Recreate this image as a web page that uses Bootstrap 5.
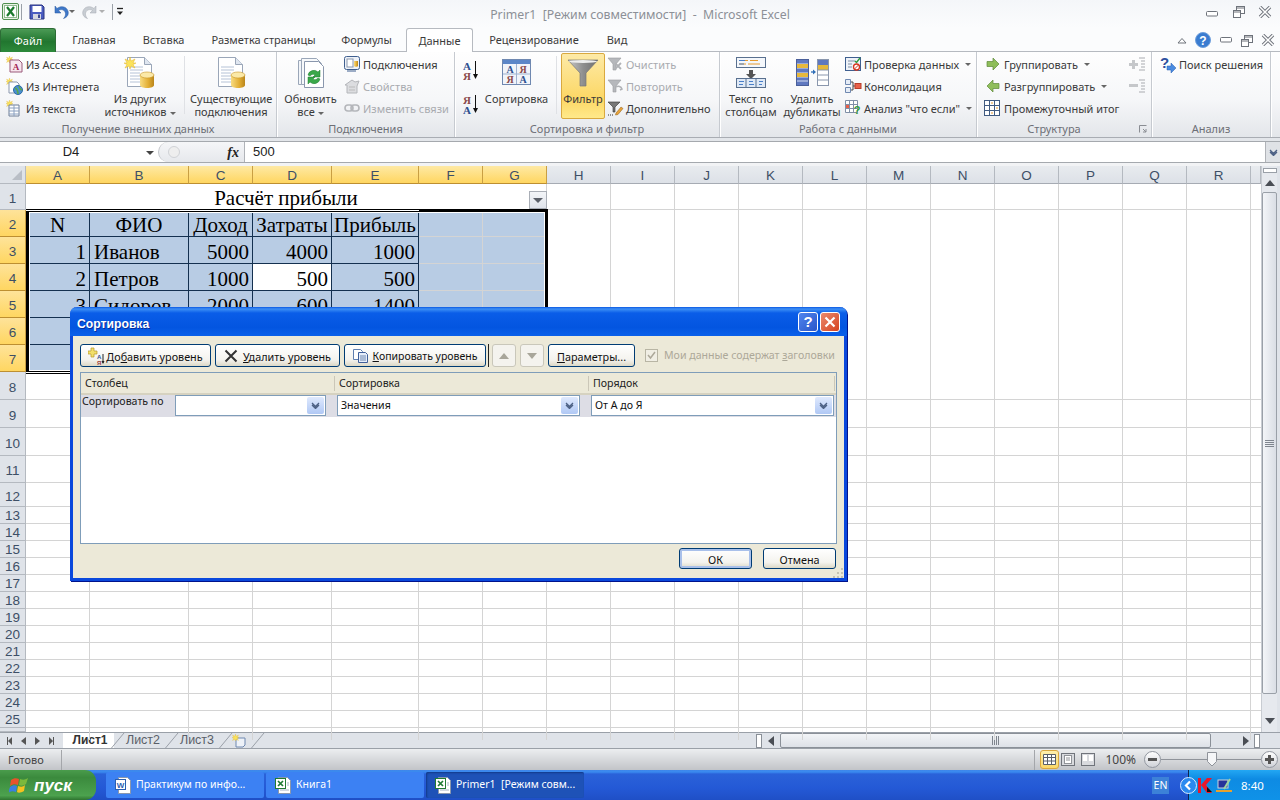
<!DOCTYPE html>
<html lang="ru">
<head>
<meta charset="utf-8">
<title>Primer1 - Microsoft Excel</title>
<link rel="stylesheet" href="https://cdn.jsdelivr.net/npm/bootstrap@5.3.0/dist/css/bootstrap.min.css">
<style>
html,body{margin:0;height:100%;overflow:hidden;background:#fff}
body,.xl-app{font-family:"Noto Sans","Liberation Sans",sans-serif;font-size:11px;line-height:13px;color:#333}
.xl-app{width:1280px;height:800px;position:relative;overflow:hidden}
/* title */
.ti-bar{height:28px;background:linear-gradient(#f4f6f9,#fbfcfd);position:relative}
.ti-qat{padding:1px 0 0 2px;height:22px}
.ti-sep{width:1px;height:16px;background:#9aa0a8;flex:none}
.ti-name{position:absolute;left:0;right:0;top:7px;text-align:center;color:#8c9097;font-size:12.3px;line-height:16px;white-space:pre}
.ti-win{position:absolute;right:0;top:5px;width:74px}
.ml1{margin-left:1px}.ml2{margin-left:2px}.ml3{margin-left:3px}.ml7{margin-left:7px}
/* tabs */
.rb-tabs{height:24px;background:#fbfcfd;border-bottom:1px solid #b6bac0;flex-wrap:nowrap}
.rb-tab{height:23px;line-height:24px;text-align:center;color:#3b3b3b}
.rb-file{width:56px;height:24px;background:linear-gradient(#4b9a55,#21762f 55%,#2d8a3b);color:#fff;border-radius:3px 3px 0 0;border:1px solid #2c6c35;border-bottom:0;margin-right:3px}
.rb-w70{width:70px}.rb-w69{width:69px}.rb-w131{width:131px}.rb-w75{width:75px}.rb-w122{width:122px}.rb-w44{width:44px}
.rb-act{width:67px;height:24px;margin-left:2px;background:#fff;border:1px solid #b6bac0;border-bottom:0;border-radius:3px 3px 0 0;position:relative;z-index:2}
.rb-right{position:absolute;right:5px;top:29px;height:22px;width:98px}
/* ribbon */
.rb-ribbon{height:86px;background:linear-gradient(#fefefe,#f6f7f9 55%,#e3e6ea);border-bottom:1px solid #a9adb3}
.rb-g{height:85px;border-right:1px solid #c6cad0;box-shadow:1px 0 0 #fff;flex:none}
.rb-g1{width:277px}.rb-g2{width:178px}.rb-g3{width:265px}.rb-g4{width:257px}.rb-g5{width:175px}.rb-g6{width:119px}
.rb-b{height:68px;padding-top:1px;flex:none}
.rb-lab{height:17px;line-height:17px;text-align:center;color:#6d6f76;position:relative}
.rb-s{height:22px;white-space:nowrap;gap:3px;color:#3a3a3a}
.rb-s svg{flex:none;overflow:visible}
.rb-dis{color:#a9abb0}
.rb-l{flex:none;text-align:center;color:#3a3a3a;white-space:nowrap}
.rb-li{height:39px;display:flex;align-items:center;justify-content:center}
.rb-vs{width:1px;height:58px;margin:3px 5px 0 6px;background:#dfe1e5;flex:none}
.rb-crt{display:inline-block;border-top:3px solid #666;border-left:3px solid transparent;border-right:3px solid transparent;vertical-align:middle;margin-left:3px}
.w102{width:102px}.w76{width:76px}.w82{width:82px}.w67{width:67px}.pl6{padding-left:6px}
.rb-filter{width:44px;height:66px;border:1px solid #d9a93f;border-radius:2px;background:linear-gradient(#fdeaa7,#fcd765 70%,#ffe98a)}
.rb-filter .rb-li{height:38px}
.rb-launch{position:absolute;right:4px;top:5px}
/* formula */
.fx-gap{height:4px;background:#e3e6ea;border-bottom:1px solid #a5a9ae}
.fx-bar{height:20px;background:#fff;border-bottom:1px solid #a5a9ae;box-sizing:content-box}
.fx-name{width:158px;position:relative;text-align:center;font-family:"Liberation Sans",sans-serif;font-size:13px;line-height:20px;padding-right:16px;color:#222}
.fx-mid{width:87px;height:20px;background:linear-gradient(#f5f6f8,#e6e8ec);border-radius:11px 0 0 11px;border:1px solid #c2c5ca;border-right:1px solid #b0b3b8;border-top:0;border-bottom:0;flex:none}
.fx-val{padding-left:8px;font-size:13px;line-height:20px;color:#222;font-family:"Liberation Sans",sans-serif}
.fx-fn{font-family:"Liberation Serif",serif;font-style:italic;font-weight:700;font-size:14px;color:#222;margin:0 5px 0 auto}
.fx-end{width:15px;height:20px;background:#dfe2e6;border-left:1px solid #b0b3b8}
.sh-band{height:3px;background:#f2f3f5}
/* sheet */
.sh-wrap{height:566px;position:relative}
.sh-main{width:1261px;flex:none}
.sh-heads{height:18px}
.sh-corner{width:26px;background:#dfe3e9;border-right:1px solid #b4b9c0;border-bottom:1px solid #b4b9c0;position:relative;flex:none}
.sh-ch{height:18px;text-align:center;font-family:"Liberation Sans",sans-serif;font-size:13.5px;line-height:19px;color:#3d4f66;background:linear-gradient(#e8ebef,#dde1e7);border-right:1px solid #b4b9c0;border-bottom:1px solid #a6abb3;flex:none}
.sh-ch.on{background:linear-gradient(#fee9a4,#ffd661);border-right-color:#c99f43;border-bottom-color:#bd8f31}
.c64{width:64px}.c99{width:99px}.c79{width:79px}.c87{width:87px}.c10{width:10px}
.sh-rh{width:26px;flex:none}
.sh-rn{text-align:center;font-family:"Liberation Sans",sans-serif;font-size:13.5px;color:#3d4f66;background:#dfe3e9;border-right:1px solid #b4b9c0;border-bottom:1px solid #b4b9c0;display:flex;align-items:center;justify-content:center;padding-top:3px}
.sh-rn.h17{padding-top:1px}.sh-rn.h4{padding-top:0}
.sh-rn.on{background:linear-gradient(#fee39a,#ffd661);border-right-color:#c99f43;border-bottom-color:#bd8f31}
.h26{height:26px}.h27{height:27px}.h28{height:28px}.h24{height:24px}.h17{height:17px}.h4{height:4px}
.sh-body{width:1235px;position:relative;flex:none;
background-image:linear-gradient(#d4d4d4,#d4d4d4),linear-gradient(#d4d4d4,#d4d4d4),linear-gradient(#d4d4d4,#d4d4d4),linear-gradient(#d4d4d4,#d4d4d4),linear-gradient(#d4d4d4,#d4d4d4),linear-gradient(#d4d4d4,#d4d4d4),linear-gradient(#d4d4d4,#d4d4d4),linear-gradient(#d4d4d4,#d4d4d4),linear-gradient(#d4d4d4,#d4d4d4),linear-gradient(#d4d4d4,#d4d4d4),linear-gradient(#d4d4d4,#d4d4d4),linear-gradient(#d4d4d4,#d4d4d4),linear-gradient(#d4d4d4,#d4d4d4),linear-gradient(#d4d4d4,#d4d4d4),linear-gradient(#d4d4d4,#d4d4d4),linear-gradient(#d4d4d4,#d4d4d4),linear-gradient(#d4d4d4,#d4d4d4),linear-gradient(#d4d4d4,#d4d4d4);
background-size:1px 100%;background-repeat:no-repeat;
background-position:63px 0,162px 0,226px 0,305px 0,392px 0,456px 0,520px 0,584px 0,648px 0,712px 0,776px 0,840px 0,904px 0,968px 0,1032px 0,1096px 0,1160px 0,1224px 0}
.sh-row{border-bottom:1px solid #d4d4d4}
.sh-title{height:25px;width:520px;background:#fff;text-align:center;font-family:"Liberation Serif",serif;font-size:21px;line-height:28px;color:#000;overflow:hidden}
.sh-cell{font-family:"Liberation Serif",serif;font-size:21px;line-height:26px;color:#000;background:#b8cce4;border-right:1px solid #14304f;border-bottom:1px solid #14304f;padding:2px 3px 0 4px;white-space:nowrap;flex:none;overflow:hidden}
.sh-cell.text-center{padding-left:0;padding-right:0}
.sh-cell.pale{border-right-color:#d4d4d4;border-bottom-color:#d4d4d4}
.sh-cell.cur{background:#fff}
.sh-sel{position:absolute;left:0;top:25px;width:522px;height:165px;border:3px solid #000;box-shadow:inset 0 0 0 1px #fff;pointer-events:none}
.sh-sel:before,.sh-sel:after{content:"";position:absolute;left:-3px;width:393px;height:1px;background:#fff}
.sh-sel:before{top:-2px}.sh-sel:after{bottom:-2px}
.sh-dd{position:absolute;left:503px;top:7px;width:18px;height:18px;background:linear-gradient(#f3f5f8,#dfe3ea);border:1px solid #a9aeb6}
.sh-vs{width:16px;flex:none;background:#e6e9ee;border-left:1px solid #c8ccd2;padding-top:2px}
.sh-vs-split{width:14px;height:5px;margin:0 auto 7px;border:1px solid #9aa0a8;background:#fff}
.sh-vs-th{width:15px;height:502px;margin-top:6px;border:1px solid #9aa0a8;border-radius:2px;background:linear-gradient(90deg,#f3f5f8,#dadee5)}
.sh-edge{width:3px;background:#dfe3e9;flex:none}
/* tabs strip */
.ts-bar{height:17px;background:#dfe3e9;border-top:1px solid #9aa0a8;border-bottom:1px solid #9aa0a8}
.ts-nav{width:63px;padding-left:7px;gap:9px;flex:none}
.ts-tab{height:15px;line-height:15px;color:#5a5f68;text-align:center;font-size:12.5px;font-family:"Liberation Sans",sans-serif;flex:none}
.ts-on{width:51px;background:#fff;font-weight:700;color:#333;padding-left:3px;font-size:12px}
.ts-t{width:53px;padding-left:3px}
.ts-s1{margin:0 -10px 0 -3px}
.ts-h{width:6px;height:14px;border:1px solid #8a9098;background:#fff;flex:none}
.ts-th{width:431px;height:15px;border:1px solid #8a9098;border-radius:2px;background:linear-gradient(#f2f4f7,#dde1e7);flex:none}
/* status */
.st-bar{height:21px;background:linear-gradient(#eceef0,#c2c4c8);color:#444}
.st-ready{width:62px;padding-left:8px;line-height:20px;border-right:1px solid #a4a6aa;height:20px;flex:none}
.st-sep{width:1px;height:20px;background:#a4a6aa;flex:none;margin-right:5px}
.st-cur{width:19px;height:19px;background:linear-gradient(#fff0ad,#fbd868);border:1px solid #dba83f;border-radius:3px;flex:none}
.st-pct{font-size:12px;color:#444;margin:0 8px 0 10px}
.st-rd{width:17px;height:17px;border-radius:50%;border:1px solid #9297a0;background:linear-gradient(#fff,#cfd2d8);flex:none}
.st-line{height:1px;background:#8f939a;width:100px;position:relative;flex:none}
.st-thumb{position:absolute;left:46px;top:-7px}
/* taskbar */
.tb-bar{height:30px;background:linear-gradient(#3f86ea 0,#3a8bf0 2px,#2a62d9 4px,#2459d6 60%,#1f4fc6 100%);color:#fff}
.tb-start{width:96px;height:30px;background:linear-gradient(#4a9c4c,#3b8a3d 25%,#4ca24e 85%,#2f7430);border-radius:0 11px 11px 0;font-style:italic;font-weight:700;font-size:17px;font-family:"Liberation Sans",sans-serif;gap:5px;padding-left:9px;color:#fff;flex:none}
.tb-btn{width:158px;height:26px;margin-right:2px;background:#3c81f3;border-radius:2px;padding:0 0 0 9px;gap:5px;color:#fff;font-size:10.5px;white-space:pre;flex:none;border:0}
.tb-btn:hover{background:#3c81f3;color:#fff}
.tb-act,.tb-act:hover{background:#1e52b7;box-shadow:inset 1px 1px 2px #123a88}
.tb-tray{width:92px;height:30px;background:linear-gradient(#23a7f3,#0e8be3 30%,#0f92e8);border-left:1px solid #10264f;gap:1px;flex:none}
.tb-en{width:17px;height:17px;background:#3c81d8;font-size:10.5px;line-height:17px;text-align:center;margin-right:19px;flex:none}
.tb-arrow{margin-left:-9px}
/* dialog */
.xd-win{position:absolute;left:70px;top:307px;width:777px;height:274px;border:3px solid #0a48dc;border-top:0;border-radius:7px 7px 0 0;background:#ece9d8;z-index:5;box-shadow:1px 1px 0 #00138c;font-size:10.6px}
.xd-title{height:29px;margin:0 -3px;padding:0 7px 0 7px;border-radius:7px 7px 0 0;background:linear-gradient(#0a58e2 0,#3d8ff5 2px,#0a5de8 6px,#0355e0 70%,#0a60ea 100%);color:#fff;font-family:"Liberation Sans",sans-serif;font-weight:700;font-size:12.2px;text-shadow:1px 1px 0 #0a2f9c}
.xd-tname{margin-top:5px}
.xd-hb{width:20px;height:20px;border:1px solid #fff;border-radius:3px;flex:none;font-size:15px;line-height:18px;text-align:center;font-weight:700;font-family:"Liberation Sans",sans-serif;text-shadow:none;color:#fff}
.xd-q{background:linear-gradient(135deg,#4f85ee,#2a56c9);margin-right:2px}
.xd-x{background:linear-gradient(135deg,#ea8a6e,#d6431f)}
.xd-tools{padding:8px 0 0 7px;height:31px}
.xd-btn{height:23px;padding:1px 0 0 0;border:1px solid #003c74;border-radius:3px;background:linear-gradient(#fff,#f4f3ee 70%,#dcd8c6);color:#111;font-size:10.8px;line-height:13px;white-space:nowrap;flex:none;box-shadow:none;gap:1px}
.xd-btn:hover{background:linear-gradient(#fff,#f4f3ee 70%,#dcd8c6);color:#111;border-color:#003c74}
.w131{width:131px}.w125{width:125px}.w142{width:142px;font-size:10.5px}.w24{width:24px}.w88{width:87px}.w73{width:73px}
.xd-dis{border-color:#c9c7ba;background:#f4f3ee}
.xd-bar{width:1px;height:23px;background:#222;margin:0 3px 0 2px;flex:none}
.xd-chk{width:13px;height:13px;border:1px solid #b8b5a4;background:#f0eee4;flex:none}
.xd-chkw{margin-left:10px;gap:6px}
.xd-gray{color:#aca899;white-space:nowrap}
.xd-tbl{height:172px;margin:5px 7px 0 7px;border:1px solid #7f9db9;background:#fff}
.xd-th{height:20px;background:#ece9d8;line-height:20px;color:#222}
.xd-thc{padding-left:4px;border-right:1px solid #cbc7b8;height:15px;line-height:15px;flex:none}
.xd-w254{width:254px}.xd-w246{width:246px}
.xd-lin{height:2px;background:#d6d2c0}
.xd-tr{height:22px;background:#dddde5}
.xd-lb{width:94px;padding:0 0 0 1px;flex:none;color:#222;white-space:nowrap}
.xd-cb{height:21px;background:#fff;border:1px solid #7f9db9;padding:1px 1px 1px 3px;flex:none;color:#111;line-height:16px}
.xd-w151{width:151px}.xd-w243{width:243px;margin-left:11px}
.xd-ar{width:17px;height:17px;margin-left:auto;background:linear-gradient(#dfe9fd,#b0c8f5);border-radius:2px;flex:none}
.xd-foot{padding:4px 8px 0 0;gap:11px}
.xd-btn.xd-f{height:21px}
.xd-ok{box-shadow:inset 0 0 0 2px #a9c0ea}
.xd-grip{position:absolute;right:0;bottom:0}
.xl-defs{position:absolute;width:0;height:0;overflow:hidden}
</style>
</head>
<body>
<svg class="xl-defs" aria-hidden="true"><defs>
<linearGradient id="gold" x1="0" x2="1"><stop offset="0" stop-color="#f8dc82"/><stop offset=".6" stop-color="#e2ad33"/><stop offset="1" stop-color="#b9851c"/></linearGradient>
<linearGradient id="fun" x1="0" x2="1"><stop offset="0" stop-color="#c9c9c9"/><stop offset=".5" stop-color="#8f8f8f"/><stop offset="1" stop-color="#6e6e6e"/></linearGradient>
<symbol id="s-star" viewBox="0 0 12 12"><path d="M6 0l1 4 4-2-2 4 3 0-3 1.500 2 3.500-4-2-1 3-1-3-4 2 2-3.500L0 6l3 0-2-4 4 2z" fill="#fbe35c" stroke="#e2b52a" stroke-width=".5"/></symbol>
<symbol id="s-dbdoc" viewBox="0 0 32 32"><path d="M3.500.5h17l7 7v22h-24z" fill="#fff" stroke="#9aa6b8"/><path d="M20.500.5v7h7" fill="#dfe6f0" stroke="#9aa6b8"/><path d="M6 10h13M6 13h13M6 16h10M6 19h10M6 22h10M6 25h10" stroke="#b5c2d6"/><path d="M16 18v10c0 1.800 3 3 7 3s7-1.200 7-3V18z" fill="url(#gold)"/><ellipse cx="23" cy="18" rx="7" ry="3" fill="#fbe9a8" stroke="#c8962a" stroke-width=".6"/></symbol>
<symbol id="s-chev" viewBox="0 0 9 7"><path d="M1 1l3.500 3.500L8 1M1 3l3.500 3.500L8 3" fill="none" stroke="#4d6185" stroke-width="1.300"/></symbol>
<symbol id="s-xdoc" viewBox="0 0 16 18"><path d="M3.500 1.500h9l3 3v13h-12z" fill="#fff" stroke="#8a97ad"/><rect x=".5" y="2.500" width="10" height="10" fill="#fff" stroke="#217a34"/><path d="M3 5l5 5M8 5l-5 5" stroke="#1f7a33" stroke-width="1.700"/><path d="M12 7h2M12 9h2M5 14h9" stroke="#a6b2c4"/></symbol>
<symbol id="s-rest" viewBox="0 0 13 13"><rect x="4.500" y="1.500" width="8" height="7" fill="#fff" stroke="#6e737b"/><path d="M5 3h7" stroke="#6e737b"/><rect x="1.500" y="5.500" width="7" height="7" fill="#fff" stroke="#6e737b"/><path d="M2 7h6" stroke="#6e737b"/></symbol>
<symbol id="s-x" viewBox="0 0 14 12"><path d="M2 1l10 10M12 1L2 11" stroke="#6e737b" stroke-width="3.400"/><path d="M2 1l10 10M12 1L2 11" stroke="#fff" stroke-width="1.500"/></symbol>
<symbol id="s-minw" viewBox="0 0 12 6"><rect x=".5" y=".5" width="11" height="4.500" rx="1" fill="#fff" stroke="#6e737b"/></symbol>
<symbol id="s-sma" viewBox="0 0 16 24"><text x="0" y="10" font-family="Liberation Serif" font-weight="700" font-size="11" fill="#2d4f8f">A</text><text x="0" y="20" font-family="Liberation Serif" font-weight="700" font-size="11" fill="#8a4a4a">Я</text><path d="M12.500 1v16" stroke="#111"/><path d="M10 14l2.500 5 2.500-5z" fill="#111"/></symbol>
<symbol id="s-smz" viewBox="0 0 16 24"><text x="0" y="10" font-family="Liberation Serif" font-weight="700" font-size="11" fill="#8a4a4a">Я</text><text x="0" y="20" font-family="Liberation Serif" font-weight="700" font-size="11" fill="#2d4f8f">A</text><path d="M12.500 1v16" stroke="#111"/><path d="M10 14l2.500 5 2.500-5z" fill="#111"/></symbol>
<symbol id="s-fil" viewBox="0 0 16 16"><path d="M1 2h13L9 8v6H6V8z" fill="#b6b8bc" stroke="#9a9ca0" stroke-width=".6"/></symbol>
</defs></svg>

<div class="xl-app d-flex flex-column">

<div class="ti-bar flex-none">
  <div class="ti-qat d-flex align-items-center">
    <svg width="17" height="17" viewBox="0 0 17 17" class="flex-none"><rect x=".5" y=".5" width="16" height="16" rx="1.500" fill="#e9f3e6" stroke="#4f8f4f"/><rect x="2.500" y="2.500" width="12" height="12" fill="#fff" stroke="#8fb98f"/><path d="M5 4l7 9M12 4l-7 9" stroke="#1c7a2d" stroke-width="2.200"/></svg>
    <span class="ti-sep ml2"></span>
    <svg width="16" height="16" viewBox="0 0 16 16" class="ml7 flex-none"><path d="M1 1h12l2 2v12H1z" fill="#4a5cc0" stroke="#2b3480"/><rect x="3.500" y="2" width="9" height="6" fill="#fff"/><rect x="4" y="10" width="8" height="5" fill="#d4d6e0"/><rect x="9" y="10.500" width="2" height="3.500" fill="#3a4790"/></svg>
    <svg width="17" height="14" viewBox="0 0 17 14" class="ml7 flex-none"><path d="M3 1v7h6L6.500 5.500C9.500 3.500 13 5 13.500 8.500c.2 2-.5 3.500-2 5 4-1 5.500-4.500 4.500-7.500C14.500 1.500 9 .3 5 3.500z" fill="#3e78c9" stroke="#27569c" stroke-width=".5"/></svg>
    <span class="rb-crt m-0 ml1"></span>
    <svg width="17" height="14" viewBox="0 0 17 14" class="ml7 flex-none"><path d="M14 1v7H8l2.500-2.500C7.500 3.500 4 5 3.500 8.500c-.2 2 .5 3.500 2 5-4-1-5.500-4.500-4.500-7.500C2.500 1.500 8 .3 12 3.500z" fill="#c8cdd3" stroke="#a5a9b0" stroke-width=".5"/></svg>
    <span class="rb-crt m-0 ml1 opacity-50"></span>
    <span class="ti-sep ml7"></span>
    <svg width="8" height="10" viewBox="0 0 8 10" class="ml3 flex-none"><path d="M1 1.500h6" stroke="#222" stroke-width="1.300"/><path d="M1 4.500h6L4 8z" fill="#222"/></svg>
  </div>
  <div class="ti-name">Primer1  [Режим совместимости]  -  Microsoft Excel</div>
  <div class="ti-win d-flex align-items-center justify-content-between">
    <svg width="12" height="6" class="mt-1"><use href="#s-minw"/></svg>
    <svg width="13" height="13"><use href="#s-rest"/></svg>
    <svg width="14" height="12" class="me-2"><use href="#s-x"/></svg>
  </div>
</div>

<div class="nav rb-tabs position-relative">
  <div class="rb-tab rb-file">Файл</div>
  <div class="rb-tab rb-w70">Главная</div>
  <div class="rb-tab rb-w69">Вставка</div>
  <div class="rb-tab rb-w131">Разметка страницы</div>
  <div class="rb-tab rb-w75">Формулы</div>
  <div class="rb-tab rb-act">Данные</div>
  <div class="rb-tab rb-w122">Рецензирование</div>
  <div class="rb-tab rb-w44">Вид</div>
</div>
<div class="rb-right d-flex align-items-center justify-content-between">
  <svg width="10" height="7" viewBox="0 0 10 7"><path d="M1 6l4-4.500L9 6z" fill="#fff" stroke="#6e737b"/></svg>
  <svg width="16" height="16" viewBox="0 0 16 16"><circle cx="8" cy="8" r="7.500" fill="#3a7cd0" stroke="#6e9fdc"/><text x="8" y="12.500" text-anchor="middle" font-family="Liberation Sans" font-weight="700" font-size="12" fill="#fff">?</text></svg>
  <svg width="12" height="6"><use href="#s-minw"/></svg>
  <svg width="13" height="13"><use href="#s-rest"/></svg>
  <svg width="14" height="12"><use href="#s-x"/></svg>
</div>

<div class="rb-ribbon d-flex flex-none">
  <!-- group 1 -->
  <div class="rb-g rb-g1">
    <div class="rb-b d-flex">
      <div class="w102 pl6">
        <div class="rb-s d-flex align-items-center"><svg width="17" height="17" viewBox="0 0 17 17"><use href="#s-star" width="7" height="7"/><path d="M4 4h9l3 3v9H4z" fill="#f7e6ee" stroke="#9a5a7a"/><text x="10" y="14" text-anchor="middle" font-family="Liberation Serif" font-weight="700" font-size="9" fill="#a3224f">A</text></svg>Из Access</div>
        <div class="rb-s d-flex align-items-center"><svg width="17" height="17" viewBox="0 0 17 17"><use href="#s-star" width="7" height="7"/><path d="M3 4h8l2 2v9H3z" fill="#fff" stroke="#8a97ad"/><circle cx="12" cy="12" r="4.500" fill="#4b8fd0" stroke="#2c6aa8"/><path d="M9 10c2 1 3 3 3 6M13 8c1 2 0 3 3 4" stroke="#5da84a" stroke-width="1.500" fill="none"/></svg>Из Интернета</div>
        <div class="rb-s d-flex align-items-center"><svg width="17" height="17" viewBox="0 0 17 17"><use href="#s-star" width="7" height="7"/><path d="M3 5h10v11H3z" fill="#fff" stroke="#6f7f97"/><path d="M3 8h10M3 11h10M3 14h10M8 5v11" stroke="#8aa0c0"/></svg>Из текста</div>
      </div>
      <div class="rb-l w76">
        <div class="rb-li"><svg width="32" height="32" style="overflow:visible"><use href="#s-dbdoc" width="32" height="32"/><use href="#s-star" width="12" height="12"/></svg></div>
        Из других<br>источников<span class="rb-crt"></span>
      </div>
      <div class="rb-vs"></div>
      <div class="rb-l w82">
        <div class="rb-li"><svg width="32" height="32"><use href="#s-dbdoc" width="32" height="32"/></svg></div>
        Существующие<br>подключения
      </div>
    </div>
    <div class="rb-lab">Получение внешних данных</div>
  </div>
  <!-- group 2 -->
  <div class="rb-g rb-g2">
    <div class="rb-b d-flex">
      <div class="rb-l w67">
        <div class="rb-li"><svg width="28" height="32" viewBox="0 0 28 32"><path d="M1.500 3.500h15l5 5v19h-20z" fill="#f2f5f9" stroke="#9aa6b8"/><path d="M4.500 1.500h15l5 5v21h-20z" fill="#f7f9fb" stroke="#9aa6b8"/><path d="M7.500 4.500h14l5 5v21h-19z" fill="#fff" stroke="#8a97ad"/><path d="M11 18a6 6 0 0 1 10-3l2-2v7h-7l2-2a3.500 3.500 0 0 0-5 1zM23 22a6 6 0 0 1-10 3l-2 2v-7h7l-2 2a3.500 3.500 0 0 0 5-1z" fill="#3aa84a" stroke="#1e7f30" stroke-width=".5"/></svg></div>
        Обновить<br>все<span class="rb-crt"></span>
      </div>
      <div>
        <div class="rb-s d-flex align-items-center"><svg width="16" height="16" viewBox="0 0 16 16"><rect x=".5" y=".5" width="15" height="13" rx="2" fill="#eef2f8" stroke="#3f5f8f"/><rect x="3" y="3" width="6" height="8" fill="#fff" stroke="#8a97ad"/><path d="M10 5v5c0 1 4 1 4 0V5z" fill="url(#gold)"/><path d="M3 15h9" stroke="#3f5f8f"/></svg>Подключения</div>
        <div class="rb-s d-flex align-items-center rb-dis"><svg width="16" height="16" viewBox="0 0 16 16"><path d="M1 7l7-5 3 2 4-1-2 5v7H3V7z" fill="#dcdde0" stroke="#b4b6ba"/><path d="M5 9h6M5 12h6" stroke="#bbb"/></svg>Свойства</div>
        <div class="rb-s d-flex align-items-center rb-dis"><svg width="16" height="16" viewBox="0 0 16 16"><rect x="1" y="5" width="8" height="6" rx="3" fill="none" stroke="#b4b6ba" stroke-width="1.600"/><rect x="7" y="5" width="8" height="6" rx="3" fill="none" stroke="#b4b6ba" stroke-width="1.600"/></svg>Изменить связи</div>
      </div>
    </div>
    <div class="rb-lab">Подключения</div>
  </div>
  <!-- group 3 -->
  <div class="rb-g rb-g3">
    <div class="rb-b d-flex">
      <div class="d-flex flex-column" style="padding:7px 0 0 8px;gap:10px;width:29px">
        <svg width="16" height="24"><use href="#s-sma"/></svg>
        <svg width="16" height="24"><use href="#s-smz"/></svg>
      </div>
      <div class="rb-l" style="width:65px">
        <div class="rb-li"><svg width="30" height="27" viewBox="0 0 30 27"><rect x=".5" y=".5" width="28" height="25" fill="#f1f4fa" stroke="#6f88b0"/><rect x="1" y="1" width="27" height="4" fill="#5b86c8"/><path d="M14.500 5v20M1 15h27" stroke="#9fb3d0"/><g font-family="Liberation Serif" font-weight="700" font-size="10" text-anchor="middle"><text x="8" y="14" fill="#2d4f8f">A</text><text x="21" y="14" fill="#8a4a4a">Я</text><text x="8" y="24" fill="#8a4a4a">Я</text><text x="21" y="24" fill="#2d4f8f">A</text></g></svg></div>
        Сортировка
      </div>
      <div class="rb-vs" style="margin:3px 4px 0 7px"></div>
      <div class="rb-l rb-filter">
        <div class="rb-li"><svg width="32" height="28" viewBox="0 0 32 28"><path d="M1 1h30L19 14v13h-6V14z" fill="url(#fun)" stroke="#777" stroke-width=".7"/><ellipse cx="16" cy="2.500" rx="14" ry="1.500" fill="#eee"/></svg></div>
        Фильтр
      </div>
      <div style="padding-left:2px">
        <div class="rb-s d-flex align-items-center rb-dis"><svg width="16" height="16"><use href="#s-fil"/><path d="M8 7l6 6M14 7l-6 6" stroke="#b0b2b6" stroke-width="1.800"/></svg>Очистить</div>
        <div class="rb-s d-flex align-items-center rb-dis"><svg width="16" height="16"><use href="#s-fil"/><path d="M9 9a4 4 0 0 1 6 2l-2 1M14 14" stroke="#b0b2b6" stroke-width="1.500" fill="none"/></svg>Повторить</div>
        <div class="rb-s d-flex align-items-center"><svg width="16" height="16" viewBox="0 0 16 16"><path d="M1 2h12L8 7v5H6V7z" fill="#777" stroke="#333" stroke-width=".6"/><path d="M9 13l5-6 2 1.500-5 6-2.500 .5z" fill="#e8a33a" stroke="#8a5a10" stroke-width=".5"/><path d="M1 15h1M3 15h1M5 15h1" stroke="#333"/></svg>Дополнительно</div>
      </div>
    </div>
    <div class="rb-lab">Сортировка и фильтр</div>
  </div>
  <!-- group 4 -->
  <div class="rb-g rb-g4">
    <div class="rb-b d-flex">
      <div class="rb-l" style="width:62px">
        <div class="rb-li"><svg width="30" height="31" viewBox="0 0 30 31"><rect x=".5" y=".5" width="29" height="10" fill="#f4f7fb" stroke="#59708f"/><path d="M3 3.500h9M14 3.500h8M3 7h7M12 7h12" stroke="#e69a2e"/><path d="M3 3.500h6M3 7h5" stroke="#4a7fc8"/><path d="M13 13h4v4h3l-5 5-5-5h3z" fill="#555"/><rect x=".5" y="21.500" width="29" height="9" fill="#dfe9f6" stroke="#59708f"/><path d="M10 22v8M20 22v8" stroke="#59708f"/><path d="M3 24.500h5M13 24.500h4M23 24.500h4M3 27.500h4M13 27.500h5M23 27.500h3" stroke="#4a7fc8"/></svg></div>
        Текст по<br>столбцам
      </div>
      <div class="rb-l" style="width:60px">
        <div class="rb-li"><svg width="33" height="27" viewBox="0 0 33 27"><rect x=".5" y=".5" width="12" height="26" fill="#5f78c0" stroke="#4a5f9a"/><path d="M1 9h11M1 5h11M1 14h11M1 18h11M1 22h11" stroke="#d8def0"/><rect x="1" y="5" width="11" height="4" fill="#e6b83c"/><rect x="1" y="14" width="11" height="4" fill="#e6b83c"/><path d="M15 13h3" stroke="#2f6fb8" stroke-width="1.300"/><path d="M17 10.500l3 2.500-3 2.500z" fill="#2f6fb8"/><rect x="21.500" y=".5" width="11" height="26" fill="#fff" stroke="#8a97ad"/><rect x="22" y="1" width="10" height="5" fill="#5f78c0"/><rect x="22" y="6" width="10" height="5" fill="#e6b83c"/><path d="M22 11h10M22 16h10M22 21h10" stroke="#8a97ad"/></svg></div>
        Удалить<br>дубликаты
      </div>
      <div style="padding-left:3px">
        <div class="rb-s d-flex align-items-center"><svg width="16" height="16" viewBox="0 0 16 16"><rect x=".5" y="1.500" width="15" height="13" fill="#eef2f8" stroke="#3f5f8f"/><path d="M3 5h7M3 8h4M3 11h4" stroke="#7f8fa6"/><path d="M10 5l1.500 1.500L15 2" stroke="#2d9a3e" fill="none" stroke-width="1.400"/><circle cx="11.500" cy="11" r="3" fill="#fff" stroke="#d6361f" stroke-width="1.300"/><path d="M9.500 13l4-4" stroke="#d6361f"/></svg>Проверка данных<span class="rb-crt"></span></div>
        <div class="rb-s d-flex align-items-center"><svg width="16" height="16" viewBox="0 0 16 16"><path d="M.5 1.500h5v5h-5zM.5 9.500h5v5h-5z" fill="#e6edf7" stroke="#6f88b0"/><path d="M6 4h2v8H6M8 8h2" stroke="#444" fill="none"/><rect x="10" y="5.500" width="6" height="5" fill="#e8604a" stroke="#b83d29"/></svg>Консолидация</div>
        <div class="rb-s d-flex align-items-center"><svg width="16" height="16" viewBox="0 0 16 16"><path d="M.5.500h12v12H.500zM.5 4.500h12M.5 8.500h12M4.500.500v12M8.500.500v12" fill="#fff" stroke="#7f8fa6"/><rect x="1" y="5" width="3" height="3" fill="#e8604a"/><text x="12" y="14" text-anchor="middle" font-family="Liberation Sans" font-weight="700" font-size="11" fill="#2d9a3e">?</text></svg>Анализ "что если"<span class="rb-crt"></span></div>
      </div>
    </div>
    <div class="rb-lab">Работа с данными</div>
  </div>
  <!-- group 5 -->
  <div class="rb-g rb-g5">
    <div class="rb-b d-flex">
      <div style="padding-left:8px;width:152px">
        <div class="rb-s d-flex align-items-center"><svg width="16" height="16" viewBox="0 0 16 16"><path d="M2 5.500h6V2l6 6-6 6v-3.500H2z" fill="#8fbe5a" stroke="#5f8a3a" stroke-width=".7"/></svg>Группировать<span class="rb-crt"></span></div>
        <div class="rb-s d-flex align-items-center"><svg width="16" height="16" viewBox="0 0 16 16"><path d="M14 5.500H8V2L2 8l6 6v-3.500h6z" fill="#8fbe5a" stroke="#5f8a3a" stroke-width=".7"/></svg>Разгруппировать<span class="rb-crt"></span></div>
        <div class="rb-s d-flex align-items-center" style="margin-left:-1px"><svg width="17" height="16" viewBox="0 0 17 16"><rect x=".5" y=".5" width="15" height="15" fill="#fff" stroke="#405a80"/><path d="M5.500 1v14M10.500 1v14M1 5.500h14M1 10.500h14" stroke="#405a80"/><path d="M7 3h2M12 8h2M7 13h2" stroke="#e69a2e"/></svg>Промежуточный итог</div>
      </div>
      <div>
        <div class="rb-s d-flex align-items-center"><svg width="16" height="14" viewBox="0 0 16 14"><path d="M0 6h3V3h3v3h3v3H6v3H3V9H0z" fill="#c5c7ca"/><path d="M10 1h6M12 4h4M12 7h4M12 10h4M10 13h6" stroke="#a9abb0"/></svg></div>
        <div class="rb-s d-flex align-items-center"><svg width="16" height="14" viewBox="0 0 16 14"><path d="M0 5h9v3H0z" fill="#c5c7ca"/><path d="M10 1h6M12 4h4M12 7h4M12 10h4M10 13h6" stroke="#a9abb0"/></svg></div>
      </div>
    </div>
    <div class="rb-lab" style="padding-right:20px">Структура<svg class="rb-launch" width="8" height="8" viewBox="0 0 8 8"><path d="M.5 7.500v-7h7M4 4l3 3M7 4v3H4" stroke="#8a8d93" fill="none"/></svg></div>
  </div>
  <!-- group 6 -->
  <div class="rb-g rb-g6">
    <div class="rb-b" style="padding-left:8px">
      <div class="rb-s d-flex align-items-center"><svg width="16" height="18" viewBox="0 0 16 18"><text x="0" y="13" font-family="Liberation Sans" font-weight="700" font-size="15" fill="#2b4f9e">?</text><path d="M7 11h4V8l5 5-5 5v-3H7z" fill="#4a8be0" stroke="#2b5fb0" stroke-width=".5"/></svg>Поиск решения</div>
    </div>
    <div class="rb-lab">Анализ</div>
  </div>
</div>

<div class="fx-gap flex-none"></div>
<div class="fx-bar d-flex flex-none">
  <div class="fx-name">D4<span class="rb-crt" style="position:absolute;left:146px;top:9px;border-top:4px solid #444;border-left-width:4px;border-right-width:4px;margin:0"></span></div>
  <div class="fx-mid d-flex align-items-center"><svg width="14" height="14" viewBox="0 0 14 14" class="ms-2"><circle cx="7" cy="7" r="5.500" fill="#eee" stroke="#d0d2d6"/></svg><span class="fx-fn">fx</span></div>
  <div class="fx-val flex-grow-1">500</div>
  <div class="fx-end d-flex align-items-center justify-content-center"><svg width="9" height="7"><use href="#s-chev"/></svg></div>
</div>
<div class="sh-band flex-none"></div>

<div class="sh-wrap d-flex">
  <div class="sh-main">
    <div class="sh-heads d-flex">
      <div class="sh-corner"><svg width="12" height="12" viewBox="0 0 12 12" class="position-absolute" style="right:2px;bottom:2px"><path d="M11 1v10H1z" fill="#b9bec6"/></svg></div>
      <div class="sh-ch on c64">A</div><div class="sh-ch on c99">B</div><div class="sh-ch on c64">C</div><div class="sh-ch on c79">D</div><div class="sh-ch on c87">E</div><div class="sh-ch on c64">F</div><div class="sh-ch on c64">G</div>
      <div class="sh-ch c64">H</div><div class="sh-ch c64">I</div><div class="sh-ch c64">J</div><div class="sh-ch c64">K</div><div class="sh-ch c64">L</div><div class="sh-ch c64">M</div><div class="sh-ch c64">N</div><div class="sh-ch c64">O</div><div class="sh-ch c64">P</div><div class="sh-ch c64">Q</div><div class="sh-ch c64">R</div><div class="sh-ch c10"></div>
    </div>
    <div class="d-flex">
      <div class="sh-rh">
        <div class="sh-rn h26">1</div>
        <div class="sh-rn on h27">2</div><div class="sh-rn on h27">3</div><div class="sh-rn on h27">4</div><div class="sh-rn on h27">5</div><div class="sh-rn on h27">6</div><div class="sh-rn on h27">7</div>
        <div class="sh-rn h28">8</div><div class="sh-rn h28">9</div><div class="sh-rn h28">10</div><div class="sh-rn h27">11</div><div class="sh-rn h24">12</div>
        <div class="sh-rn h17">13</div><div class="sh-rn h17">14</div><div class="sh-rn h17">15</div><div class="sh-rn h17">16</div><div class="sh-rn h17">17</div><div class="sh-rn h17">18</div><div class="sh-rn h17">19</div><div class="sh-rn h17">20</div><div class="sh-rn h17">21</div><div class="sh-rn h17">22</div><div class="sh-rn h17">23</div><div class="sh-rn h17">24</div><div class="sh-rn h17">25</div>
        <div class="sh-rn h4"></div>
      </div>
      <div class="sh-body">
        <div class="sh-row h26"><div class="sh-title">Расчёт прибыли</div></div>
        <div class="d-flex h27"><div class="sh-cell c64 text-center">N</div><div class="sh-cell c99 text-center">ФИО</div><div class="sh-cell c64 text-center">Доход</div><div class="sh-cell c79 text-center">Затраты</div><div class="sh-cell c87 text-center">Прибыль</div><div class="sh-cell pale c64"></div><div class="sh-cell pale c64"></div></div>
        <div class="d-flex h27"><div class="sh-cell c64 text-end">1</div><div class="sh-cell c99">Иванов</div><div class="sh-cell c64 text-end">5000</div><div class="sh-cell c79 text-end">4000</div><div class="sh-cell c87 text-end">1000</div><div class="sh-cell pale c64"></div><div class="sh-cell pale c64"></div></div>
        <div class="d-flex h27"><div class="sh-cell c64 text-end">2</div><div class="sh-cell c99">Петров</div><div class="sh-cell c64 text-end">1000</div><div class="sh-cell cur c79 text-end">500</div><div class="sh-cell c87 text-end">500</div><div class="sh-cell pale c64"></div><div class="sh-cell pale c64"></div></div>
        <div class="d-flex h27"><div class="sh-cell c64 text-end">3</div><div class="sh-cell c99">Сидоров</div><div class="sh-cell c64 text-end">2000</div><div class="sh-cell c79 text-end">600</div><div class="sh-cell c87 text-end">1400</div><div class="sh-cell pale c64"></div><div class="sh-cell pale c64"></div></div>
        <div class="d-flex h27"><div class="sh-cell c64"></div><div class="sh-cell c99"></div><div class="sh-cell c64"></div><div class="sh-cell c79"></div><div class="sh-cell c87"></div><div class="sh-cell pale c64"></div><div class="sh-cell pale c64"></div></div>
        <div class="d-flex h27"><div class="sh-cell c64"></div><div class="sh-cell c99"></div><div class="sh-cell c64"></div><div class="sh-cell c79"></div><div class="sh-cell c87"></div><div class="sh-cell pale c64"></div><div class="sh-cell pale c64"></div></div>
        <div class="sh-row h28"></div><div class="sh-row h28"></div><div class="sh-row h28"></div><div class="sh-row h27"></div><div class="sh-row h24"></div>
        <div class="sh-row h17"></div><div class="sh-row h17"></div><div class="sh-row h17"></div><div class="sh-row h17"></div><div class="sh-row h17"></div><div class="sh-row h17"></div><div class="sh-row h17"></div><div class="sh-row h17"></div><div class="sh-row h17"></div><div class="sh-row h17"></div><div class="sh-row h17"></div><div class="sh-row h17"></div><div class="sh-row h17"></div>
        <div class="h4"></div>
        <div class="sh-sel"></div>
        <div class="sh-dd d-flex align-items-center justify-content-center"><span style="border-top:5px solid #5a5f68;border-left:5px solid transparent;border-right:5px solid transparent"></span></div>
      </div>
    </div>
  </div>
  <div class="sh-vs d-flex flex-column align-items-center">
    <div class="sh-vs-split"></div>
    <svg width="10" height="6" viewBox="0 0 10 6"><path d="M0 6l5-6 5 6z" fill="#4a4e55"/></svg>
    <div class="sh-vs-th d-flex align-items-center justify-content-center"><svg width="9" height="7" viewBox="0 0 9 7"><path d="M0 .5h9M0 2.500h9M0 4.500h9M0 6.500h9" stroke="#7f858e"/></svg></div>
    <svg width="10" height="6" viewBox="0 0 10 6" class="mt-auto mb-2"><path d="M0 0l5 6 5-6z" fill="#4a4e55"/></svg>
  </div>
  <div class="sh-edge"></div>
</div>

<div class="ts-bar d-flex align-items-center flex-none">
  <div class="ts-nav d-flex align-items-center">
    <svg width="5" height="8" viewBox="0 0 5 8"><path d="M0 0h1v8H0zM5 0v8L1 4z" fill="#555"/></svg>
    <svg width="5" height="8" viewBox="0 0 5 8"><path d="M5 0v8L0 4z" fill="#555"/></svg>
    <svg width="5" height="8" viewBox="0 0 5 8"><path d="M0 0v8l5-4z" fill="#555"/></svg>
    <svg width="5" height="8" viewBox="0 0 5 8"><path d="M4 0h1v8H4zM0 0v8l4-4z" fill="#555"/></svg>
  </div>
  <div class="ts-tab ts-on">Лист1</div>
  <svg width="14" height="15" viewBox="0 0 14 15" class="flex-none ts-s1"><path d="M.5 15L13 0" stroke="#9aa0a8"/></svg>
  <div class="ts-tab ts-t">Лист2</div>
  <svg width="14" height="15" viewBox="0 0 14 15" class="flex-none ts-s1"><path d="M.5 15L13 0" stroke="#9aa0a8"/></svg>
  <div class="ts-tab ts-t">Лист3</div>
  <svg width="14" height="15" viewBox="0 0 14 15" class="flex-none" style="margin:0 -1px 0 -3px"><path d="M.5 15L13 0" stroke="#9aa0a8"/></svg>
  <svg width="16" height="14" viewBox="0 0 16 14" class="flex-none"><path d="M4 4h9v7l-2 2H4z" fill="#eef2f8" stroke="#6f88b0"/><use href="#s-star" width="7" height="7"/></svg>
  <svg width="14" height="15" viewBox="0 0 14 15" class="flex-none ml3"><path d="M.5 15L13 0" stroke="#9aa0a8"/></svg>
  <div class="ts-h ms-auto"></div>
  <svg width="6" height="10" viewBox="0 0 6 10" class="flex-none" style="margin:0 6px"><path d="M6 0v10L0 5z" fill="#4a4e55"/></svg>
  <div class="ts-th d-flex align-items-center justify-content-center"><svg width="7" height="9" viewBox="0 0 7 9"><path d="M.5 0v9M2.500 0v9M4.500 0v9M6.500 0v9" stroke="#7f858e"/></svg></div>
  <svg width="6" height="10" viewBox="0 0 6 10" class="flex-none" style="margin:0 5px 0 32px"><path d="M0 0v10l6-5z" fill="#4a4e55"/></svg>
  <div class="ts-h" style="margin-right:20px"></div>
</div>

<div class="st-bar d-flex align-items-center flex-none">
  <div class="st-ready">Готово</div>
  <div class="st-sep ms-auto"></div>
  <div class="st-cur d-flex align-items-center justify-content-center"><svg width="13" height="11" viewBox="0 0 13 11"><path d="M.5.500h12v10H.500zM.5 3.500h12M.5 7h12M4.500.500v10M8.500.500v10" fill="#fff" stroke="#5a5f68"/></svg></div>
  <svg width="14" height="13" viewBox="0 0 14 13" class="ml2"><rect x=".5" y=".5" width="13" height="12" fill="#d8dade" stroke="#70747b"/><rect x="3.500" y="2.500" width="7" height="8" fill="#fff" stroke="#909398"/><path d="M5 5h4M5 7h4" stroke="#909398"/></svg>
  <svg width="14" height="13" viewBox="0 0 14 13" style="margin-left:6px"><rect x=".5" y=".5" width="13" height="12" fill="#d8dade" stroke="#70747b"/><rect x="2" y="2" width="4" height="6" fill="#fff"/><rect x="8" y="2" width="4" height="6" fill="#fff"/></svg>
  <div class="st-pct">100%</div>
  <div class="st-rd d-flex align-items-center justify-content-center"><svg width="9" height="3"><rect width="9" height="3" fill="#555"/></svg></div>
  <div class="st-line"><svg class="st-thumb" width="10" height="15" viewBox="0 0 10 15"><path d="M.5.500h9v9L5 14 .5 9.500z" fill="#f5f6f8" stroke="#8f939a"/></svg></div>
  <div class="st-rd d-flex align-items-center justify-content-center" style="margin-right:2px"><svg width="9" height="9" viewBox="0 0 9 9"><path d="M3 0h3v3h3v3H6v3H3V6H0V3h3z" fill="#555"/></svg></div>
</div>

<div class="tb-bar d-flex align-items-center flex-none">
  <div class="tb-start d-flex align-items-center">
    <svg width="20" height="18" viewBox="0 0 20 18"><path d="M2 4c3-2 5-2 8-1l-1 6c-3-1-5-1-8 1z" fill="#e8532b"/><path d="M11 3c3 1 5 1 8-1l-2 6c-3 2-5 2-7 1z" fill="#7ab93c"/><path d="M1 11c3-2 5-2 7-1l-1 6c-3-1-5-1-8 1z" fill="#3b7fe0"/><path d="M9 10c3 1 5 1 7-1l-1 6c-3 2-6 2-7 1z" fill="#f5c21f"/></svg>
    <span>пуск</span>
  </div>
  <div class="d-flex" style="margin-left:10px">
    <div class="btn tb-btn d-flex align-items-center"><svg width="16" height="18" viewBox="0 0 16 18" class="flex-none"><path d="M3.500 1.500h9l3 3v13h-12z" fill="#fff" stroke="#8a97ad"/><rect x=".5" y="3.500" width="10" height="10" fill="#fff" stroke="#2b5fb0"/><text x="5.500" y="11.500" text-anchor="middle" font-family="Liberation Sans" font-weight="700" font-size="8" fill="#2b5fb0">W</text></svg>Практикум по инфо...</div>
    <div class="btn tb-btn d-flex align-items-center"><svg width="16" height="18" class="flex-none"><use href="#s-xdoc"/></svg>Книга1</div>
    <div class="btn tb-btn tb-act d-flex align-items-center"><svg width="16" height="18" class="flex-none"><use href="#s-xdoc"/></svg>Primer1  [Режим совм...</div>
  </div>
  <div class="ms-auto d-flex align-items-center">
    <div class="tb-en">EN</div>
  </div>
  <div class="tb-tray d-flex align-items-center">
    <svg width="17" height="17" viewBox="0 0 17 17" class="flex-none tb-arrow"><circle cx="8.500" cy="8.500" r="8" fill="#2a8af0" stroke="#d8ecff"/><path d="M10 4.500l-4 4 4 4" stroke="#fff" stroke-width="2.200" fill="none"/></svg>
    <svg width="15" height="15" viewBox="0 0 15 15" class="flex-none"><path d="M0 0h3v15H0zM3 7l6-7h5L8 7l6 8H9z" fill="#e8192c"/><path d="M9 9l5 5h-5z" fill="#111"/></svg>
    <svg width="17" height="16" viewBox="0 0 17 16" class="flex-none ml2"><rect x="2" y="3" width="10" height="8" fill="#27329a" stroke="#cfd4dc"/><path d="M0 14h16" stroke="#e8a12e" stroke-width="2"/><path d="M8 12l6-10" stroke="#9fd3a0" stroke-width="2"/></svg>
    <span class="flex-none ml7" style="font-size:11.5px">8:40</span>
  </div>
</div>

<!-- dialog -->
<div class="xd-win d-flex flex-column">
  <div class="xd-title d-flex align-items-center flex-none">
    <span class="flex-grow-1 xd-tname">Сортировка</span>
    <div class="xd-hb xd-q">?</div>
    <div class="xd-hb xd-x d-flex align-items-center justify-content-center p-0"><svg width="12" height="12" viewBox="0 0 12 12"><path d="M1.500 1.500l9 9M10.500 1.500l-9 9" stroke="#fff" stroke-width="2.200"/></svg></div>
  </div>
  <div class="xd-tools d-flex flex-none">
    <button class="btn xd-btn w131 d-inline-flex align-items-center justify-content-center me-1" type="button"><svg width="17" height="18" viewBox="0 0 17 18" class="flex-none"><path d="M3 1h3v3h3v3H6v3H3V7H0V4h3z" fill="#f2df6b" stroke="#b99a2a" stroke-width=".7"/><text x="9" y="12" font-family="Liberation Sans" font-weight="700" font-size="6" fill="#2d4f8f">A</text><text x="9" y="18" font-family="Liberation Sans" font-weight="700" font-size="6" fill="#a04040">Я</text><path d="M15 7v9" stroke="#222"/><path d="M13.500 14l1.500 3 1.500-3z" fill="#222"/></svg><span>До<u>б</u>авить уровень</span></button>
    <button class="btn xd-btn w125 d-inline-flex align-items-center justify-content-center me-1" type="button"><svg width="14" height="14" viewBox="0 0 14 14" class="flex-none me-1"><path d="M1.500 1.500l11 11M12.500 1.500l-11 11" stroke="#333" stroke-width="2"/></svg><span><u>У</u>далить уровень</span></button>
    <button class="btn xd-btn w142 d-inline-flex align-items-center justify-content-center" type="button"><svg width="15" height="14" viewBox="0 0 15 14" class="flex-none me-1"><path d="M.5.500h7l2 2v8h-9z" fill="#fff" stroke="#5f7fb0"/><path d="M5.500 3.500h7l2 2v8h-9z" fill="#e6eefb" stroke="#3f5f9a"/><path d="M7 7h6M7 9h6M7 11h6" stroke="#6f88b0"/></svg><span><u>К</u>опировать уровень</span></button>
    <span class="xd-bar"></span>
    <button class="btn xd-btn xd-dis w24 d-inline-flex align-items-center justify-content-center me-1" type="button" aria-label="up"><svg width="10" height="6" viewBox="0 0 10 6"><path d="M0 6l5-6 5 6z" fill="#a8a69a"/></svg></button>
    <button class="btn xd-btn xd-dis w24 d-inline-flex align-items-center justify-content-center me-1" type="button" aria-label="down"><svg width="10" height="6" viewBox="0 0 10 6"><path d="M0 0l5 6 5-6z" fill="#a8a69a"/></svg></button>
    <button class="btn xd-btn w88 d-inline-flex align-items-center justify-content-center" type="button"><span><u>П</u>араметры...</span></button>
    <div class="d-flex align-items-center xd-chkw">
      <span class="xd-chk d-flex align-items-center justify-content-center"><svg width="9" height="9" viewBox="0 0 9 9"><path d="M1 4l2.500 3L8 1" stroke="#aca899" stroke-width="1.500" fill="none"/></svg></span>
      <span class="xd-gray">Мои данные содержат <u>з</u>аголовки</span>
    </div>
  </div>
  <div class="xd-tbl flex-none">
    <div class="xd-th d-flex align-items-center">
      <div class="xd-thc xd-w254">Столбец</div>
      <div class="xd-thc xd-w254">Сортировка</div>
      <div class="xd-thc xd-w246">Порядок</div>
    </div>
    <div class="xd-lin"></div>
    <div class="xd-tr d-flex">
      <div class="xd-lb">Сортировать по</div>
      <div class="xd-cb xd-w151 d-flex"><span></span><span class="xd-ar d-flex align-items-center justify-content-center"><svg width="9" height="7"><use href="#s-chev"/></svg></span></div>
      <div class="xd-cb xd-w243 d-flex"><span>Значения</span><span class="xd-ar d-flex align-items-center justify-content-center"><svg width="9" height="7"><use href="#s-chev"/></svg></span></div>
      <div class="xd-cb xd-w243 d-flex"><span>От А до Я</span><span class="xd-ar d-flex align-items-center justify-content-center"><svg width="9" height="7"><use href="#s-chev"/></svg></span></div>
    </div>
  </div>
  <div class="xd-foot d-flex justify-content-end flex-none">
    <button class="btn xd-btn xd-f xd-ok w73 d-inline-flex align-items-center justify-content-center" type="button">ОК</button>
    <button class="btn xd-btn xd-f w73 d-inline-flex align-items-center justify-content-center" type="button">Отмена</button>
  </div>
  <svg class="xd-grip" width="11" height="11" viewBox="0 0 11 11"><path d="M8 1h2v2H8zM4 5h2v2H4zM8 5h2v2H8zM0 9h2v2H0zM4 9h2v2H4zM8 9h2v2H8z" fill="#c5c2b2"/></svg>
</div>

</div>
</body>
</html>
